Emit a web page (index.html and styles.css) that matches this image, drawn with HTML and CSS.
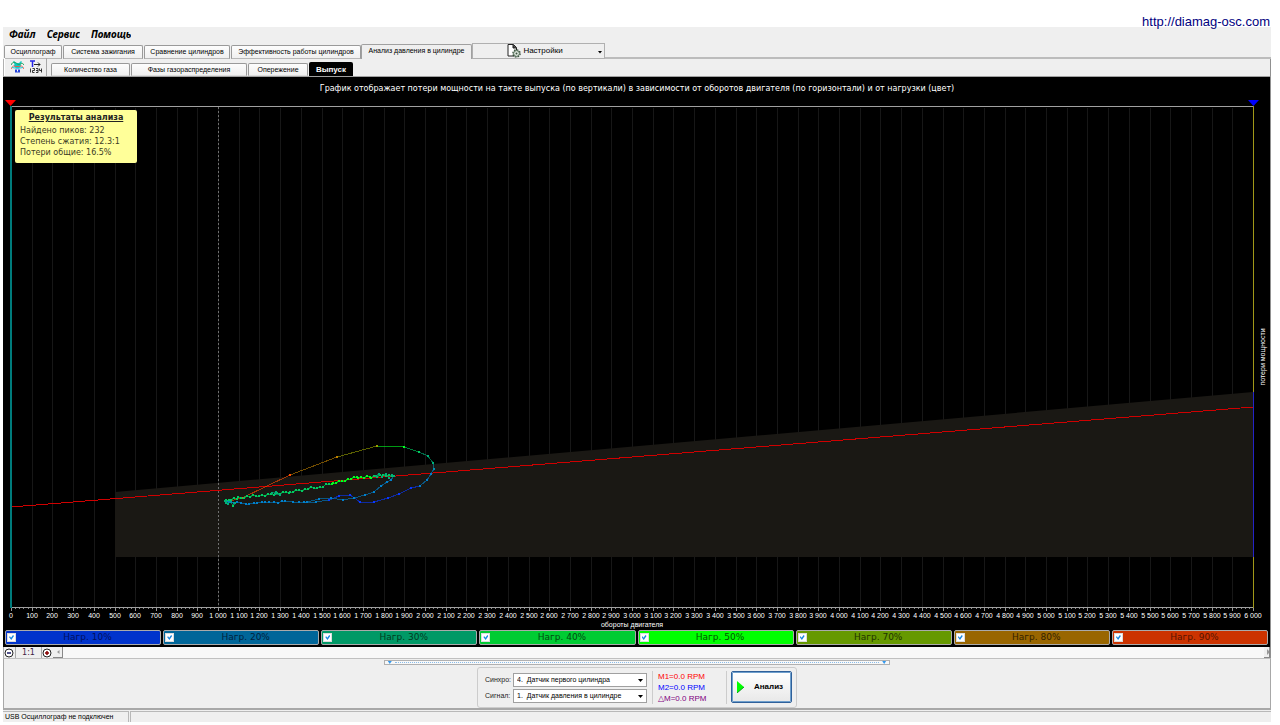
FILE: index.html
```html
<!DOCTYPE html>
<html lang="ru">
<head>
<meta charset="utf-8">
<title>Анализ давления в цилиндре</title>
<link rel="stylesheet" href="styles.css">
</head>
<body>
<header class="site"><a class="site-link" href="http://diamag-osc.com">http://diamag-osc.com</a></header>
<main class="app">
  <nav class="menu">
    <button type="button">Файл</button>
    <button type="button">Сервис</button>
    <button type="button">Помощь</button>
  </nav>
  <div class="tabs">
    <button type="button" class="tab tab-osc">Осциллограф</button>
    <button type="button" class="tab tab-ign">Система зажигания</button>
    <button type="button" class="tab tab-cmp">Сравнение цилиндров</button>
    <button type="button" class="tab tab-eff">Эффективность работы цилиндров</button>
    <button type="button" class="tab tab-active">Анализ давления в цилиндре</button>
    <button type="button" class="settings">
      <svg class="settings-icon" viewBox="0 0 14 14"><path d="M1 .5h5.500l3 3V12H1z" fill="#fff" stroke="#222"/><path d="M6 .5v3.500h3.500" fill="#444" stroke="#222"/><circle cx="9.500" cy="9.500" r="3.600" fill="#dfe8df" stroke="#344a38" stroke-width="1.400" stroke-dasharray="1.600 1.200"/><circle cx="9.500" cy="9.500" r="2.900" fill="#dfe8df" stroke="#4c6650"/><circle cx="9.500" cy="9.500" r="1" fill="#39513d"/></svg>
      <span>Настройки</span>
      <svg class="settings-caret" viewBox="0 0 4 3"><path d="M0 0h4L2 2.500z"/></svg>
    </button>
    <span class="tabs-rest"></span>
  </div>
  <div class="subbar">
    <div class="tools">
      <button type="button" class="tool" aria-label="Графики">
        <svg viewBox="0 0 13 13"><path d="M3 1l2 2h3l2-2 1 1-1.500 2 .5 2-2 2.500H5L3 6l.5-2L2 2z" fill="#10c8c0"/><path d="M0 5C2 1 4 2 6.500 4S11 1 13 5" fill="none" stroke="#17a35c"/><path d="M0 9c2-4 3-3 4.500-2.500h4C10 6 11 5 13 9" fill="none" stroke="#e45a4e"/><path d="M1 7.500l3 .5h5l3-.5" fill="none" stroke="#20c8d8"/><path d="M4 9.500h5v3H4z" fill="#2341d8"/><path d="M6 9.500h1v2H6z" fill="#fff"/></svg>
      </button>
      <button type="button" class="tool" aria-label="Метки">
        <svg viewBox="0 0 13 13"><path d="M1 1h5M3.500 1v6" stroke="#2424e8" stroke-width="1.500"/><path d="M5 4.500h6M9 2.500l2 2-2 2" fill="none" stroke="#222"/><path d="M1.500 8.500v4M3.500 8.500h2v2h-2v2h2M7 8.500h2v4H7m0-2h2M10.500 8.500v2h2m0-2v4" fill="none" stroke="#222" stroke-width=".9"/></svg>
      </button>
    </div>
    <button type="button" class="tab sub sub-gas">Количество газа</button>
    <button type="button" class="tab sub sub-phase">Фазы газораспределения</button>
    <button type="button" class="tab sub sub-adv">Опережение</button>
    <button type="button" class="sub-active">Выпуск</button>
  </div>
  <section class="scope">
    <svg id="chart" class="chart" viewBox="3 77 1267 552">
      <text class="chart-title" x="637" y="91">График отображает потери мощности на такте выпуска (по вертикали) в зависимости от оборотов двигателя (по горизонтали) и от нагрузки (цвет)</text>
      <g id="grid" shape-rendering="crispEdges"></g>
      <path d="M115 492L1253 392V557H115z" fill="#1a1814"/>
      <path d="M11 507L1253 407" stroke="#d00000" shape-rendering="crispEdges"/>
      <path d="M218.500 107V607" stroke="#707070" stroke-dasharray="2 2" shape-rendering="crispEdges"/>
      <g id="trace" shape-rendering="crispEdges"></g>
      <g shape-rendering="crispEdges">
        <path d="M11 106h1243v1H11zM11 607h1243v1H11z" fill="#a0a0a0"/>
        <path d="M10 106h2v502h-2z" fill="#007c7c"/>
        <path d="M1253 106h1v502h-1z" fill="#a09818"/>
        <path d="M1253 392h1v165h-1z" fill="#2424c8"/>
      </g>
      <path d="M5 100h11l-5.500 6z" fill="#f00"/>
      <path d="M1248 100h11l-5.500 6z" fill="#00f"/>
      <g id="scale"></g>
      <text class="axis" x="632" y="627">обороты двигателя</text>
      <text class="axis" transform="translate(1265 357) rotate(-90)">потери мощности</text>
    </svg>
    <aside class="results">
      <h2>Результаты анализа</h2>
      <p>Найдено пиков: 232</p>
      <p>Степень сжатия: 12.3:1</p>
      <p>Потери общие: 16.5%</p>
    </aside>
    <div class="legend">
      <label class="load load-10"><input type="checkbox" checked><span>Нагр. 10%</span></label>
      <label class="load load-20"><input type="checkbox" checked><span>Нагр. 20%</span></label>
      <label class="load load-30"><input type="checkbox" checked><span>Нагр. 30%</span></label>
      <label class="load load-40"><input type="checkbox" checked><span>Нагр. 40%</span></label>
      <label class="load load-50"><input type="checkbox" checked><span>Нагр. 50%</span></label>
      <label class="load load-70"><input type="checkbox" checked><span>Нагр. 70%</span></label>
      <label class="load load-80"><input type="checkbox" checked><span>Нагр. 80%</span></label>
      <label class="load load-90"><input type="checkbox" checked><span>Нагр. 90%</span></label>
    </div>
  </section>
  <div class="zoombar">
    <button type="button" class="zoom" aria-label="Уменьшить"><svg viewBox="0 0 10 10"><circle cx="5" cy="5" r="4" fill="#fff" stroke="#222"/><path d="M3 5h4" stroke="#1a1a66" stroke-width="1.500"/></svg></button>
    <button type="button" class="zoom-reset">1:1</button>
    <button type="button" class="zoom" aria-label="Увеличить"><svg viewBox="0 0 10 10"><circle cx="5" cy="5" r="4" fill="#fff" stroke="#222"/><path d="M3 5h4M5 3v4" stroke="#800" stroke-width="1.500"/></svg></button>
    <button type="button" class="scroll" aria-label="Влево"><svg viewBox="0 0 10 10"><path d="M6.500 3v4L4 5z" fill="#999"/></svg></button>
    <span class="track"></span>
    <button type="button" class="scroll scroll-right" aria-label="Вправо"><svg viewBox="0 0 6 10"><path d="M3 2v6l3-3z" fill="#999"/></svg></button>
  </div>
  <section class="bottom">
    <div class="splitter"><i></i><b></b><i></i></div>
    <form class="panel">
      <div class="fields">
        <label for="sync">Синхро:</label>
        <div class="pick"><select id="sync"><option>4.&nbsp; Датчик первого цилиндра</option></select><svg viewBox="0 0 5 3"><path d="M0 0h5L2.500 3z"/></svg></div>
        <label for="signal">Сигнал:</label>
        <div class="pick"><select id="signal"><option>1.&nbsp; Датчик давления в цилиндре</option></select><svg viewBox="0 0 5 3"><path d="M0 0h5L2.500 3z"/></svg></div>
      </div>
      <div class="marks">
        <span class="m1">M1=0.0 RPM</span>
        <span class="m2">M2=0.0 RPM</span>
        <span class="md">△M=0.0 RPM</span>
      </div>
      <button type="button" class="analyze"><svg viewBox="0 0 7 12"><path d="M0 0l7 6-7 6z" fill="#0f0"/><path d="M0 12l7-6" stroke="#0a9a20"/></svg><span>Анализ</span></button>
    </form>
  </section>
  <footer class="status"><span class="status-usb">USB Осциллограф не подключен</span><span class="status-rest"></span></footer>
</main>
<script src="chart.js"></script>
</body>
</html>
```
FILE: styles.css
```css
* { box-sizing: border-box; }
body {
  margin: 0;
  background: #fff;
  color: #000;
  font: 7px/10px "Liberation Sans", Arial, sans-serif;
}
button, select, input {
  margin: 0;
  padding: 0;
  border: 0;
  background: none;
  color: inherit;
  font: inherit;
  white-space: nowrap;
  overflow: hidden;
}
svg { display: block; }
.site { display: flex; justify-content: flex-end; align-items: flex-end; height: 27px; padding-right: 10px; }
.site-link { position: relative; color: #000080; font-size: 13px; line-height: 10px; text-decoration: none; }
.app { display: flex; flex-direction: column; margin: 0 9px 0 3px; background: #efefef; }
.menu { display: flex; gap: 11px; height: 16px; padding: 0 6px; }
.menu button { height: 14px; font: italic bold 10px/14px "Noto Sans", sans-serif; }
.tabs { display: flex; align-items: flex-end; height: 16px; padding-left: 1px; }
.tab {
  height: 14px;
  margin-right: 1px;
  border: 1px solid #9a9a9a;
  border-bottom-color: #b8b8b8;
  border-radius: 2px 2px 0 0;
  background: linear-gradient(#fdfdfd, #f0f0f0);
  line-height: 12px;
}
.tab-osc { width: 58px; }
.tab-ign { width: 80px; }
.tab-cmp { width: 86px; }
.tab-eff { width: 130px; margin-right: 0; }
.tab-active { width: 111px; height: 15px; padding-bottom: 3px; border-bottom: 0; border-color: #a0a0a0; background: #efefef; }
.tabs > .tab:not(.tab-active) { padding-bottom: 1px; line-height: 11px; }
.settings { position: relative; align-self: flex-start; display: flex; justify-content: center; align-items: center; gap: 2px; width: 133px; height: 16px; margin-left: -1px; border: 1px solid #b0b0b0; padding-right: 7px; }
.settings-icon { width: 14px; height: 14px; }
.settings span { font-size: 8px; }
.settings-caret { position: absolute; right: 2px; top: 7px; width: 4px; height: 3px; }
.tabs-rest { flex: 1; border-bottom: 2px solid #bcbcbc; }
.subbar { display: flex; align-items: flex-end; height: 18px; border-left: 1px solid #b0b0b0; border-right: 1px solid #909090; border-bottom: 1px solid #a0a0a0; }
.tools { display: flex; align-items: center; gap: 5px; width: 43px; height: 18px; margin: 0 4px 0 0; padding: 0 0 1px 6px; border-right: 1px solid #a8a8a8; border-left: 1px solid #fff; }
.tool { width: 13px; height: 13px; }
.sub { height: 13px; border-bottom-color: #ddd; }
.sub-gas { width: 79px; }
.sub-phase { width: 116px; }
.sub-adv { width: 60px; }
.sub-active { width: 44px; height: 14px; border-radius: 2px 2px 0 0; background: #000; color: #fff; font-size: 8px; font-weight: bold; line-height: 13px; }
.scope { position: relative; background: #000; padding-bottom: 1px; border-right: 1px solid #909090; }
.chart { width: 100%; height: auto; font-family: "Liberation Sans", Arial, sans-serif; }
.chart-title { fill: #fff; font: 8px "DejaVu Sans", Verdana, sans-serif; text-anchor: middle; }
.axis { fill: #fff; font-size: 7px; text-anchor: middle; }
.results {
  position: absolute;
  left: 12px;
  top: 33px;
  width: 122px;
  padding: 3px 5px 5px;
  border-radius: 2px;
  background: #ffff99;
  color: #3c3c24;
  font: 8px/11px "DejaVu Sans", Verdana, sans-serif;
}
.results h2 { margin: 0 0 2px; color: #222; font-size: 8px; line-height: 10px; text-align: center; text-decoration: underline; }
.results p { margin: 0; }
.legend { display: grid; grid-template-columns: repeat(8, 1fr); gap: 2px; padding: 1px 2px 1px; }
.load { display: flex; align-items: center; height: 15px; padding: 0 1px; border: 1px solid #aaa; border-radius: 2px; color: #1a1a1a; font: 9px/13px "DejaVu Sans", Verdana, sans-serif; }
.load span { flex: 1; text-align: center; }
.load input { position: relative; appearance: none; width: 9px; height: 9px; border: 1px solid #ddd; background: #fff; }
.load input:checked::after { content: ""; position: absolute; inset: 1px; background: #1787e0; clip-path: polygon(0 40%, 20% 25%, 40% 55%, 80% 0, 100% 20%, 45% 100%); }
.load-10 { background: #0033cc; color: #001060; }
.load-20 { background: #006699; color: #001f3c; }
.load-30 { background: #009966; color: #003a20; }
.load-40 { background: #00cc33; color: #004a10; }
.load-50 { background: #00ff00; color: #005500; }
.load-70 { background: #669900; color: #1f3300; }
.load-80 { background: #996600; color: #332200; }
.load-90 { background: #cc3300; color: #551400; }
.zoombar { display: flex; height: 11px; border-right: 1px solid #909090; border-left: 1px solid #b0b0b0; }
.zoom { width: 11px; }
.zoom svg { width: 10px; height: 10px; }
.zoom-reset { width: 27px; border: 1px solid #aaa; border-width: 0 1px; color: #402040; font: 8px/11px "DejaVu Sans", Verdana, sans-serif; }
.scroll { width: 10px; border: solid #888; border-width: 0 1px 1px 0; }
.scroll svg { height: 10px; }
.scroll-right { width: 6px; }
.track { flex: 1; background: #f8f8f8; }
.bottom { display: flex; flex-direction: column; align-items: center; gap: 2px; height: 52px; padding-top: 1px; border: 1px solid #a8a8a8; border-top-color: #c0c0c0; border-bottom-width: 2px; }
.splitter { display: flex; align-items: center; width: 40%; height: 5px; border: 1px solid #b0b0b0; background: #f8f8f8; }
.splitter i { width: 10px; height: 3px; background: #3399ee; clip-path: polygon(30% 0, 70% 0, 50% 100%); }
.splitter b { flex: 1; border-top: 1px dotted #88bbe8; }
.panel { display: flex; align-items: flex-start; width: 320px; height: 41px; padding: 3px 0 0 7px; border: 1px solid #ccc; border-radius: 3px; }
.fields { display: grid; grid-template-columns: 28px 134px; row-gap: 2px; align-items: center; padding-top: 2px; color: #222; }
.pick { position: relative; }
.pick select { display: block; appearance: none; width: 134px; height: 14px; padding-left: 3px; border: 1px solid #a0a0a0; background: #fff; color: #000; }
.pick svg { position: absolute; right: 4px; top: 6px; width: 5px; height: 3px; }
.marks { display: flex; flex-direction: column; width: 75px; height: 33px; margin: 0 4px 0 5px; padding-left: 5px; border: solid #ccc; border-width: 0 1px; font: 8px/11px "Liberation Sans", Arial, sans-serif; }
.m1 { color: #f00; }
.m2 { color: #00f; }
.md { color: #800080; }
.analyze { display: flex; align-items: center; gap: 10px; width: 61px; height: 32px; padding-left: 5px; border: 1px solid #2f609a; outline: 1px solid #6f9fcc; outline-offset: -2px; border-radius: 2px; background: linear-gradient(#fff, #e8e8e8); font-size: 8px; font-weight: bold; }
.analyze svg { width: 7px; height: 12px; }
.status { display: flex; gap: 1px; height: 12px; padding-top: 1px; line-height: 9px; }
.status-usb { width: 126px; padding-left: 2px; border: solid #b8b8b8; border-width: 1px 1px 0 0; }
.status-rest { flex: 1; border: solid #b8b8b8; border-width: 1px 0 0 1px; }
```
FILE: chart.js
```js
const NS = "http://www.w3.org/2000/svg";

function add(parent, name, attrs, text) {
  const node = document.createElementNS(NS, name);
  for (const key in attrs) node.setAttribute(key, attrs[key]);
  if (text) node.textContent = text;
  parent.appendChild(node);
}

const grid = document.getElementById("grid");
const scale = document.getElementById("scale");
const trace = document.getElementById("trace");
const STEP = 20.7;

// Vertical grid, minor ticks and rpm labels, one group per 100 rpm.
for (let i = 0; i <= 60; i++) {
  const x = 11.5 + i * STEP;
  const px = Math.floor(x) + 0.5;
  add(grid, "path", { d: `M${px} 108V607`, stroke: "#171717" });
  add(scale, "path", { d: `M${px} 608V611`, stroke: "#999" });
  if (i < 60) {
    for (let k = 1; k < 5; k++) {
      const t = Math.floor(x + k * STEP / 5) + 0.5;
      add(scale, "path", { d: `M${t} 608V609`, stroke: "#888" });
    }
  }
  const rpm = i * 100;
  const label = rpm < 1000 ? String(rpm) : `${Math.floor(rpm / 1000)} ${String(rpm % 1000).padStart(3, "0")}`;
  add(scale, "text", { class: "axis", x: Math.round(x - 0.5), y: 618 }, label);
}

// Each measured point: x, y, colour by load.
function plot(points) {
  for (let i = 1; i < points.length; i++) {
    const [x1, y1] = points[i - 1];
    const [x2, y2, color] = points[i];
    add(trace, "path", { d: `M${x1} ${y1}L${x2} ${y2}`, stroke: color, opacity: 0.6 });
  }
  for (const [x, y, color] of points) {
    add(trace, "rect", { x: x - 1, y: y - 1, width: 2, height: 2, fill: color });
  }
}

const RED = "#ff4c00", AMBER = "#c08000", OLIVE = "#98a000", LIME = "#00ff20";
const GREEN = "#00cc60", TEAL = "#00b078", SEA = "#008cb0", AZURE = "#0080cc", BLUE = "#0838ff";

plot([
  [226, 502, TEAL], [242, 498, RED], [290, 475, RED], [337, 457, AMBER], [377, 446, OLIVE],
  [404, 447, LIME], [419, 452, GREEN], [428, 456, TEAL], [433, 463, TEAL], [434, 469, SEA],
  [431, 474, AZURE], [427, 480, AZURE], [420, 486, AZURE], [411, 488, BLUE], [399, 494, BLUE],
  [388, 498, BLUE], [374, 502, BLUE], [360, 502, BLUE], [350, 495, BLUE], [339, 496, BLUE],
  [329, 500, BLUE], [316, 502, AZURE], [304, 502, AZURE]
]);

plot([
  [394, 476, TEAL], [391, 480, AZURE], [387, 482, AZURE], [381, 486, AZURE], [374, 492, AZURE],
  [365, 495, AZURE], [354, 498, AZURE], [343, 500, AZURE], [331, 498, AZURE], [319, 499, AZURE],
  [307, 502, AZURE], [299, 502, AZURE], [293, 502, AZURE], [285, 501, AZURE], [282, 501, AZURE],
  [278, 503, AZURE], [274, 502, AZURE], [269, 502, AZURE], [265, 502, AZURE], [262, 502, AZURE],
  [257, 503, AZURE], [254, 503, AZURE], [249, 504, AZURE], [246, 504, AZURE], [241, 503, AZURE],
  [237, 502, AZURE], [234, 503, AZURE], [231, 502, AZURE], [228, 501, AZURE]
]);

const loop = [];
const bends = [[226, 501], [231, 499], [238, 498], [250, 496], [265, 495], [280, 493], [290, 492], [305, 489], [320, 487], [333, 483], [345, 480], [358, 477], [371, 477], [383, 475], [394, 476]];
for (let i = 1; i < bends.length; i++) {
  const [x1, y1] = bends[i - 1];
  const [x2, y2] = bends[i];
  for (let x = x1; x < x2; x += 3) {
    const y = y1 + (y2 - y1) * (x - x1) / (x2 - x1) + ((loop.length * 7) % 5 - 2) * 0.5;
    loop.push([x, Math.round(y), x > 330 && x < 374 ? LIME : GREEN]);
  }
}
loop.push([394, 476, TEAL]);
plot(loop);
plot([[225, 501, TEAL], [228, 504, TEAL], [230, 500, GREEN], [233, 506, GREEN], [235, 503, TEAL], [229, 502, SEA], [226, 503, TEAL]]);
plot([[272, 493, TEAL], [276, 492, TEAL], [280, 495, TEAL], [275, 494, TEAL]]);
plot([[376, 476, TEAL], [379, 474, TEAL], [382, 477, TEAL], [386, 474, TEAL], [389, 478, TEAL], [392, 475, TEAL]]);
```
